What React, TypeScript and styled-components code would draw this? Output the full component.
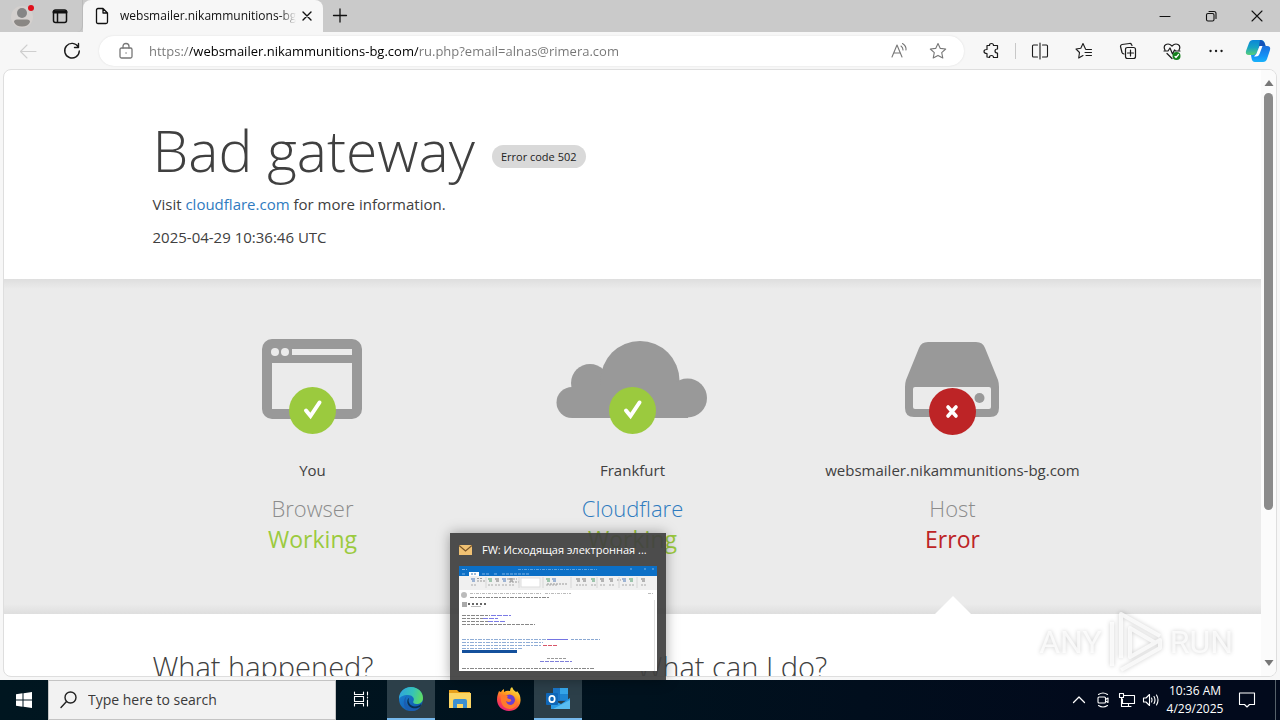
import React from "react";
import styled, { createGlobalStyle } from "styled-components";

const GlobalStyle = createGlobalStyle`
  * { box-sizing: border-box; }
  html, body { margin: 0; padding: 0; }
  body { font-family: "Open Sans", "Noto Sans", sans-serif; color: #404040; overflow: hidden; }
  button { border: 0; padding: 0; margin: 0; background: none; font: inherit; color: inherit; }
  input { font: inherit; }
  h1, h2, h3, p { margin: 0; font-weight: 400; }
  a { color: #2f7bbf; text-decoration: none; }
  svg { display: block; flex: none; }
`;

const Desktop = styled.div`
  display: flex;
  flex-direction: column;
  height: 100vh;
  background: #f7f7f7;
`;

/* ---------- browser chrome ---------- */

const TabBar = styled.header`
  display: flex;
  align-items: stretch;
  height: 32px;
  background: #cacaca;
  color: #111;
`;

const TabTools = styled.div`
  display: flex;
  align-items: center;
  gap: 18px;
  width: 83px;
  padding-left: 10px;
  border-right: 1px solid #bababa;
  border-bottom-right-radius: 6px;
`;

const Tab = styled.div`
  display: flex;
  align-items: center;
  width: 240px;
  padding: 0 6px 0 12px;
  background: #f7f7f7;
  border-radius: 8px 8px 0 0;
`;

const TabTitle = styled.span`
  flex: 1;
  margin-left: 11px;
  overflow: hidden;
  white-space: nowrap;
  font-size: 12px;
  line-height: 16px;
  color: #111;
  mask-image: linear-gradient(90deg, #000 160px, transparent 176px);
`;

const IconButton = styled.button<{ $w: number }>`
  display: flex;
  align-items: center;
  justify-content: center;
  flex: none;
  width: ${(p) => p.$w}px;
  height: 100%;
`;

const WindowControls = styled.div`
  display: flex;
  margin-left: auto;
`;

const Toolbar = styled.div`
  display: flex;
  align-items: center;
  height: 37px;
  padding: 0 2px 0 6px;
  color: #1b1b1b;
`;

const AddressBar = styled.div`
  display: flex;
  align-items: center;
  flex: 1;
  height: 30px;
  margin: 0 5px;
  padding: 0 6px 0 10px;
  border-radius: 15px;
  background: #fff;
  box-shadow: 0 0 2px #dcdcdc;
  color: #777;
`;

const UrlInput = styled.input`
  flex: 1;
  min-width: 0;
  margin-left: 6px;
  padding: 0;
  border: 0;
  outline: 0;
  font-size: 13px;
  line-height: 20px;
  color: #222;
  background: linear-gradient(90deg, #757575 41px, #000 41px, #000 269px, #757575 269px);
  background-clip: text;
  -webkit-background-clip: text;
  -webkit-text-fill-color: transparent;
`;

const Divider = styled.span`
  width: 1px;
  height: 16px;
  margin: 0 2px;
  background: #c8c8c8;
`;

/* ---------- page ---------- */

const Viewport = styled.div`
  display: flex;
  flex: 1;
  min-height: 0;
  margin: 0 3px 3px;
  border: 1px solid #dedede;
  border-radius: 8px;
  background: #fff;
  overflow: hidden;
`;

const Page = styled.main`
  flex: 1;
  min-width: 0;
  overflow: hidden;
`;

const Container = styled.div`
  max-width: 960px;
  margin: 0 auto;
`;

const PageHeader = styled(Container)`
  height: 209px;
  padding-top: 39px;
  font-size: 15px;
  line-height: 24px;
  p { margin-bottom: 9px; }
`;

const TitleRow = styled.div`
  display: flex;
  align-items: center;
  gap: 17px;
  height: 83px;
`;

const Title = styled.h1`
  font-size: 57px;
  line-height: 83px;
  font-weight: 300;
`;

const Code = styled.span`
  margin-top: 12px;
  padding: 0 9px;
  border-radius: 12px;
  background: #d9d9d9;
  font-size: 11px;
  line-height: 23px;
  color: #222;
`;

const StatusBand = styled.section`
  background: linear-gradient(#dedede, #ebebeb 3%, #ebebeb 97%, #dedede);
`;

const StatusColumns = styled(Container)`
  display: grid;
  grid-template-columns: repeat(3, 1fr);
  height: 335px;
`;

const StatusCard = styled.div`
  position: relative;
  display: flex;
  flex-direction: column;
  align-items: center;
  padding-top: 58px;
  white-space: nowrap;
`;

const Place = styled.span`
  margin-top: 23px;
  font-size: 15px;
  line-height: 24px;
`;

const Role = styled.h3<{ $color: string }>`
  margin-top: 11px;
  font-size: 22px;
  line-height: 30px;
  font-weight: 300;
  color: ${(p) => p.$color};
`;

const State = styled.span<{ $color: string }>`
  font-size: 23px;
  line-height: 32px;
  color: ${(p) => p.$color};
`;

const Notch = styled.span`
  position: absolute;
  bottom: 0;
  left: 50%;
  margin-left: -18px;
  border: solid transparent;
  border-width: 0 18px 18px;
  border-bottom-color: #fff;
`;

const Explain = styled(Container)`
  display: grid;
  grid-template-columns: 1fr 1fr;
  column-gap: 8px;
  padding-top: 32px;
`;

const Question = styled.h2`
  font-size: 29px;
  line-height: 42px;
  font-weight: 300;
  white-space: nowrap;
`;

const ScrollBar = styled.div`
  display: flex;
  flex-direction: column;
  align-items: center;
  width: 15px;
  padding: 9px 0;
  background: #fbfbfb;
`;

const Thumb = styled.div`
  flex: 418;
  width: 9px;
  margin-top: 6px;
  border-radius: 5px;
  background: #8b8b8b;
`;

const TrackRest = styled.div`
  flex: 150;
`;

/* ---------- taskbar ---------- */

const TaskBar = styled.footer`
  display: flex;
  align-items: stretch;
  position: relative;
  height: 40px;
  background: linear-gradient(90deg, #001620, #00121e 50%, #020a1c 85%);
  color: #fff;
`;

const SearchBox = styled.label`
  display: flex;
  align-items: center;
  gap: 11px;
  width: 288px;
  padding-left: 11px;
  background: #f2f2f2;
  border: 1px solid #c4c4c4;
  color: #222;
  input {
    flex: 1;
    min-width: 0;
    border: 0;
    padding: 0;
    background: none;
    font-size: 14px;
    line-height: 20px;
  }
  input::placeholder { color: #3a3a3a; opacity: 1; }
`;

const Apps = styled.div`
  display: flex;
  gap: 1px;
`;

const AppSlot = styled.div`
  position: relative;
`;

const AppButton = styled(IconButton)<{ $open?: boolean }>`
  background: ${(p) => (p.$open ? "#2c3f49" : "none")};
  border-bottom: 2px solid ${(p) => (p.$open ? "#76b9ed" : "transparent")};
`;

const Tray = styled.div`
  display: flex;
  margin-left: auto;
`;

const Clock = styled.time`
  width: 64px;
  padding-top: 2px;
  font-size: 12px;
  line-height: 18px;
  text-align: center;
  white-space: nowrap;
`;

const ShowDesktop = styled.button`
  width: 5px;
  margin-left: 8px;
  border-left: 1px solid #56616a;
`;

const Preview = styled.div`
  position: absolute;
  bottom: 100%;
  left: 50%;
  width: 216px;
  margin-left: -108px;
  padding: 0 9px 9px;
  background: rgba(64, 64, 64, 0.93);
  box-shadow: 0 0 12px rgba(0, 0, 0, 0.35);
`;

const PreviewTitle = styled.div`
  display: flex;
  align-items: center;
  gap: 10px;
  height: 33px;
  font-size: 11px;
  line-height: 16px;
  white-space: nowrap;
`;

const Watermark = styled.div`
  position: absolute;
  right: 47px;
  bottom: 46px;
  display: flex;
  align-items: center;
  gap: 6px;
  color: rgba(255, 255, 255, 0.75);
  font-family: Roboto, sans-serif;
  font-size: 32px;
  line-height: 64px;
  filter: drop-shadow(0 0 2px rgba(0, 0, 0, 0.25));
`;

/* ---------- drawings ---------- */

const Svg = ({ w = 20, h = w, children, sw = 1.1 }: { w?: number; h?: number; sw?: number; children: React.ReactNode }) => (
  <svg width={w} height={h} viewBox={`0 0 ${w} ${h}`} fill="none" stroke="currentColor" strokeWidth={sw} strokeLinecap="round" strokeLinejoin="round" aria-hidden="true">
    {children}
  </svg>
);

const Check = ({ x, y }: { x: number; y: number }) => (
  <g>
    <circle cx={x} cy={y} r="23.5" fill="#9bca3e" />
    <path d={`M${x - 6.5} ${y}L${x - 2} ${y + 5.5}L${x + 7} ${y - 8}`} fill="none" stroke="#fff" strokeWidth="4" strokeLinecap="round" />
  </g>
);

const BrowserDrawing = () => (
  <svg width="160" height="98" viewBox="1 0 160 98" aria-hidden="true">
    <rect x="30" y="2" width="100" height="80" rx="10" fill="#999" />
    <circle cx="43" cy="15" r="4" fill="#ebebeb" />
    <circle cx="53" cy="15" r="4" fill="#ebebeb" />
    <path d="M60 12H120V18H60ZM40 26H120V72H40Z" fill="#ebebeb" />
    <Check x={80.5} y={73.5} />
  </svg>
);

const CloudDrawing = () => (
  <svg width="160" height="98" viewBox="1 0 160 98" aria-hidden="true">
    <g fill="#999">
      <circle cx="20" cy="65.5" r="15.5" />
      <circle cx="38" cy="46" r="19" />
      <circle cx="88" cy="43.5" r="39.5" />
      <circle cx="135.500" cy="61" r="19.500" />
      <rect x="20" y="50" width="116" height="31" />
    </g>
    <Check x={80.5} y={73.5} />
  </svg>
);

const ServerDrawing = () => (
  <svg width="160" height="98" viewBox="1 0 160 98" aria-hidden="true">
    <path d="M56 5H104Q111 5 113 11L126 43Q127 46 127 50V71Q127 80 118 80H42Q33 80 33 71V50Q33 46 34 43L47 11Q49 5 56 5Z" fill="#999" />
    <path d="M43 50H117Q119 50 119 52V70Q119 72 117 72H43Q41 72 41 70V52Q41 50 43 50Z" fill="#ebebeb" />
    <circle cx="107.500" cy="61" r="5" fill="#999" />
    <circle cx="80.500" cy="74.500" r="23.500" fill="#bd2426" />
    <path d="M76 70L84 79M84 70L76 79" stroke="#fff" strokeWidth="3.600" strokeLinecap="round" />
  </svg>
);

const CopilotLogo = () => (
  <svg width="26" height="24" viewBox="0 0 26 24" aria-hidden="true">
    <defs>
      <linearGradient id="cpA" x1="0" y1="0" x2="0" y2="1"><stop stopColor="#0a86d8" /><stop offset=".5" stopColor="#16a3c4" /><stop offset="1" stopColor="#58cf7a" /></linearGradient>
      <linearGradient id="cpB" x1="0" y1="0" x2="0" y2="1"><stop stopColor="#1d6fdc" /><stop offset=".6" stopColor="#1491f5" /><stop offset="1" stopColor="#18b2fa" /></linearGradient>
    </defs>
    <path d="M8 1H16Q19 1 20 5L20.500 7H18Q14 7 13 11L11.500 16H4Q0 16 1 12L4 4Q5 1 8 1Z" fill="url(#cpA)" />
    <path d="M18 23H10Q7 23 6.500 19L6 16H8Q11 16 12.500 12L14 7H22Q26 7 25 11L22 20Q21 23 18 23Z" fill="url(#cpB)" />
    <path d="M15 1Q18 1 20 5L20.500 7H14L15 1Z" fill="#1552b8" />
    <path d="M14.500 7H17.500L14.500 15Q13.500 17.500 11 17.500H9Q11.500 16 12.500 12Z" fill="#fff" />
  </svg>
);

const EdgeLogo = () => (
  <svg width="26" height="26" viewBox="0 0 26 26" aria-hidden="true">
    <defs>
      <linearGradient id="edA" x1="0" y1=".3" x2="1" y2=".5"><stop stopColor="#2fa4de" /><stop offset=".55" stopColor="#35c3b8" /><stop offset="1" stopColor="#5fdc62" /></linearGradient>
      <linearGradient id="edB" x1="0" y1="0" x2="1" y2="1"><stop stopColor="#1c84d6" /><stop offset="1" stopColor="#0e55a6" /></linearGradient>
    </defs>
    <circle cx="13" cy="13" r="12" fill="url(#edB)" />
    <path d="M1 13C1 6 6 1 13 1C20 1 25 6 25 12C25 16 22 18 18.500 18C15.500 18 14.500 16.500 15.500 15C17 12 14 9 10 9C5 9 2 11 1 13Z" fill="url(#edA)" />
    <path d="M9 10C6 14 8 21 15 22.500C18 23 21 22 22.500 20.500C20 25 14 26 9.500 24C5 21 4.500 13 9 10Z" fill="#1b5db0" />
    <path d="M11 12C9.500 16 12 20 17 20.500C20 20.500 22.500 19 23.500 17.500L22.500 20.500C19 23 14 23 11 20C8.500 17 9 13 11 12Z" fill="#0b2f50" />
  </svg>
);

const FolderLogo = () => (
  <svg width="24" height="22" viewBox="0 0 24 22" aria-hidden="true">
    <path d="M1 2H9L11 4H22V9H1Z" fill="#e9a21d" />
    <path d="M1 5H23V20H1Z" fill="#fbd564" />
    <path d="M5 20V13Q5 11 7 11H17Q19 11 19 13V20H15V16H9V20Z" fill="#3c8fd0" />
  </svg>
);

const FirefoxLogo = () => (
  <svg width="26" height="26" viewBox="0 0 26 26" aria-hidden="true">
    <defs>
      <linearGradient id="ffA" x1=".8" y1="0" x2=".3" y2="1"><stop stopColor="#fff04a" /><stop offset=".4" stopColor="#ff9a20" /><stop offset=".7" stopColor="#ff4a42" /><stop offset="1" stopColor="#e32081" /></linearGradient>
    </defs>
    <path d="M3 5Q4 6 5 6Q6 4 8 3L8 6Q11 4 14 5Q14 2 16 1Q17 4 20 6Q21 6 21 5Q25 9 24.500 15C24 21 19 25 13 25C6 25 1 20 1 13.500C1 10 2 8 3 5Z" fill="url(#ffA)" />
    <circle cx="13.500" cy="14" r="5.500" fill="#6a3fd0" />
    <path d="M5 10Q8 8 12 10Q10 12 13 13Q16 13 15 15Q13 17 10 15Q11 19 15 19Q20 18 19 12Q23 17 19 21Q14 25 8 21Q4 17 5 10Z" fill="#ff7a2b" />
  </svg>
);

const OutlookLogo = () => (
  <svg width="26" height="24" viewBox="0 0 26 24" aria-hidden="true">
    <path d="M8 1H23V14H8Z" fill="#1a75c6" />
    <path d="M15 1H23V7H15Z" fill="#35a6ea" />
    <path d="M15 7H23V13H15Z" fill="#1d85d2" />
    <path d="M6 12L16 17L25 11V22H6Z" fill="#2a9be6" />
    <path d="M8 22L25 13V22Z" fill="#59bdf2" />
    <rect x="1" y="6" width="12" height="12" rx="1" fill="#0f67b8" />
    <ellipse cx="7" cy="12" rx="2.700" ry="3.100" fill="none" stroke="#fff" strokeWidth="1.700" />
  </svg>
);

const ribbonGroups = [12, 29, 36, 43, 50, 87, 93, 117, 123, 132, 141, 150, 163, 170, 182];

const MailThumbnail = () => (
  <svg width="198" height="105" viewBox="0 0 198 105" fill="none" aria-hidden="true">
    <rect width="198" height="105" fill="#fff" />
    <rect width="198" height="10" fill="#0b6fc6" />
    <rect x="10" y="6" width="10" height="5" fill="#fff" />
    <path d="M12 8H18" stroke="#3a78b5" strokeDasharray="2 1" />
    <path d="M59 3.500H138" stroke="#5fa3dd" strokeDasharray="3 1 1 1" />
    <path d="M3 3.500H8M3 8H6M23 8H30M35 8H39M43 8H70M171 3H173M185 3H187M193 3H195" stroke="#7fb6e8" strokeDasharray="3 1" />
    <rect y="10" width="198" height="14" fill="#f0f0f0" />
    <rect x="62" y="12" width="19" height="9" fill="#fff" stroke="#ddd" />
    {ribbonGroups.map((x, i) => (
      <g key={x}>
        <path d={`M${x} 13H${x + 4}M${x + 1} 15H${x + 4}`} stroke={i % 4 === 1 ? "#4c9a6a" : i % 3 === 0 ? "#4d79b8" : "#777"} />
        <path d={`M${x} 19H${x + 5}`} stroke="#aaa" strokeDasharray="2 1" />
      </g>
    ))}
    <path d="M18 12.500H24M18 15H26M48 13H58M50 16H60M88 18H108M158 14H162" stroke="#999" strokeDasharray="2 1" />
    <path d="M27 11V22M60 11V22M84 11V22M112 11V22M138 11V22M160 11V22M178 11V22" stroke="#d6d6d6" />
    <circle cx="5" cy="29" r="3" fill="#bbb" />
    <path d="M11 27.500H82M86 27.500H112M189 27.500H195" stroke="#bbb" strokeDasharray="3 1 1 1" />
    <path d="M11 31.500H90" stroke="#888" strokeDasharray="4 1 2 1" />
    <path d="M3 38H7M9 38H28" stroke="#666" strokeWidth="2" strokeDasharray="2 2" />
    <path d="M12 40.500H22" stroke="#bbb" />
    <rect x="3" y="36" width="5" height="5" fill="#aaa" />
    <path d="M3 49.500H31M3 52.500H28M3 55.500H30M3 58.500H76" stroke="#888" strokeDasharray="4 1 3 1" />
    <path d="M32 49.500H52M24 52.500H39M29 55.500H47" stroke="#7b7be6" strokeDasharray="5 1" />
    <path d="M3 73.500H108M3 76.500H84M3 79.500H82M3 82.500H64" stroke="#8fadd6" strokeDasharray="4 1 2 1" />
    <path d="M88 73.500H109" stroke="#7474e2" />
    <path d="M112 73.500H141" stroke="#8aa8d2" strokeDasharray="3 1" />
    <path d="M84 79.500H98" stroke="#d8566a" strokeDasharray="4 1" />
    <rect x="3" y="84" width="55" height="3" fill="#14509c" />
    <path d="M88 92.500H107" stroke="#999" strokeDasharray="3 1" />
    <path d="M81 95.500H113" stroke="#7f7fda" strokeDasharray="4 1" />
    <path d="M3 102.500H135" stroke="#888" strokeDasharray="4 1 2 1" />
    <path d="M195.500 34V105" stroke="#e2e2e2" />
  </svg>
);

const trayIcons: [string, React.ReactNode][] = [
  ["Show hidden icons", <Svg w={14} key="c" sw={1.3}><path d="M1.500 9.500L7 4L12.500 9.500" /></Svg>],
  ["Meet now", <Svg w={16} h={18} key="m"><path d="M3.500 3.500Q8 .5 12.500 3.500M3.500 14.500Q8 17.500 12.500 14.500M4 6H9.500Q10.500 6 10.500 7V11Q10.500 12 9.500 12H4Q3 12 3 11V7Q3 6 4 6ZM10.500 8.500L13 7V11.500L10.500 10" /></Svg>],
  ["Network", <Svg w={18} h={16} key="n"><path d="M6 3.500H16.500V11.500H4.500V7M1.500 1.500H5.500V5.500H1.500ZM3.500 5.500V14.500H13M10.500 11.500V14.500" /></Svg>],
  ["Volume", <Svg w={18} h={16} key="v"><path d="M1.500 6H4L7.500 2.500V13.500L4 10H1.500ZM9.500 6Q10.500 8 9.500 10M12 4.500Q14 8 12 11.500M14.500 3Q17.500 8 14.500 13" /></Svg>],
];

const toolbarIcons: [string, React.ReactNode][] = [
  ["Split screen", <Svg w={18} key="s"><path d="M6.500 3H2.500Q1.500 3 1.500 4V14Q1.500 15 2.500 15H6.500M11.500 3H15.500Q16.500 3 16.500 4V14Q16.500 15 15.500 15H11.500M9 1V17" /></Svg>],
  ["Favorites", <Svg w={18} key="f"><path d="M10.500 7L8 1.500L5.800 6.300L1 7L4.500 10.500L3.700 16L8 13.500M11 7.500H16.500M10 10.500H16.500M11 13.500H16.500" /></Svg>],
  ["Collections", <Svg w={18} key="l" sw={1.2}><path d="M8.500 5.500H14.500Q16.500 5.500 16.500 7.500V14.500Q16.500 16.500 14.500 16.500H8.500Q6.500 16.500 6.500 14.500V7.500Q6.500 5.500 8.500 5.500M11.500 8V14M8.500 11H14.500M13 3.500L12.500 2.500Q12 1.300 10.500 1.500L3 2.500Q1.300 3 1.500 4.500L3 10.500Q3.500 11.800 5 12" /></Svg>],
  ["Browser essentials", <Svg w={18} key="b" sw={1.2}><path d="M2 8Q0 4 3 2.500Q6 1 9 4Q12 1 15 2.500Q18 4 16 8M1 9H5L7 6L9.500 12L11.500 8L12.500 9H17M4 11.500L9 16.500" /><circle cx="13.500" cy="14" r="4" fill="#14801b" stroke="none" /><path d="M12 14.500L13 15.500L15.500 12.500" stroke="#fff" /></Svg>],
  ["Settings and more", <Svg w={18} key="d"><path d="M3.500 9H3.600M9 9H9.100M14.500 9H14.600" strokeWidth="2.300" /></Svg>],
];

export default function App() {
  return (
    <Desktop>
      <GlobalStyle />
      <TabBar>
        <TabTools>
          <button aria-label="Profile">
            <svg width="24" height="26" viewBox="0 0 24 26" aria-hidden="true">
              <circle cx="12" cy="14" r="11" fill="#d4d0ce" />
              <circle cx="12" cy="10" r="5" fill="#858585" />
              <path d="M4 19Q4 16.500 7 16.500H17Q20 16.500 20 19Q18 23.500 12 23.500Q6 23.500 4 19Z" fill="#8a8784" />
              <circle cx="21" cy="5" r="3" fill="#e0101c" />
            </svg>
          </button>
          <button aria-label="Tab actions">
            <Svg w={16} sw={1.5}><rect x="1.500" y="2" width="13" height="12.500" rx="2" /><path d="M2 4H14" strokeWidth="3" /><path d="M5.500 5V14" /></Svg>
          </button>
        </TabTools>
        <Tab>
          <Svg w={14} h={18} sw={1.3}><path d="M3 1.500H8L12.500 6V15Q12.500 16.500 11 16.500H3Q1.500 16.500 1.500 15V3Q1.500 1.500 3 1.500ZM8 1.500V6H12.500" /></Svg>
          <TabTitle>websmailer.nikammunitions-bg.com</TabTitle>
          <IconButton $w={20} aria-label="Close tab"><Svg w={12} sw={1.4}><path d="M2 2L10 10M10 2L2 10" /></Svg></IconButton>
        </Tab>
        <IconButton $w={34} aria-label="New tab"><Svg w={16} sw={1.3}><path d="M1.500 7.500H14.500M8 1V14" /></Svg></IconButton>
        <WindowControls>
          <IconButton $w={46} aria-label="Minimize"><Svg w={12}><path d="M1 6.500H11" /></Svg></IconButton>
          <IconButton $w={46} aria-label="Restore"><Svg w={12}><rect x="1.500" y="3.500" width="7.500" height="7.500" rx="1.500" /><path d="M4 1.500H9Q11 1.500 11 3.500V8.500" /></Svg></IconButton>
          <IconButton $w={46} aria-label="Close"><Svg w={12}><path d="M1 1L11 11M11 1L1 11" /></Svg></IconButton>
        </WindowControls>
      </TabBar>

      <Toolbar>
        <IconButton $w={44} aria-label="Back"><Svg w={18}><path d="M17 9.500H1.500M8 3L1.500 9.500L8 16" stroke="#cfcfcf" /></Svg></IconButton>
        <IconButton $w={44} aria-label="Refresh"><Svg w={18} sw={1.4}><path d="M15.300 5A7.300 7.300 0 1 0 16.300 9M15.500 1.500V5.500H11.500" /></Svg></IconButton>
        <AddressBar>
          <IconButton $w={34} aria-label="Site information"><Svg w={16} h={18} sw={1.3}><rect x="2" y="6" width="12" height="10" rx="1.500" /><path d="M5 6V4.500Q5 1.500 8 1.500Q11 1.500 11 4.500V6M8 11H8.100" /></Svg></IconButton>
          <UrlInput aria-label="Address" defaultValue="https://websmailer.nikammunitions-bg.com/ru.php?email=alnas@rimera.com" />
          <IconButton $w={38} aria-label="Read aloud"><Svg w={18}><path d="M2 15L7 3L12 15M4 11H10.500M11 4Q13 5.500 13 8M12.500 1.500Q16.500 4 16 8" /></Svg></IconButton>
          <IconButton $w={40} aria-label="Add to favorites"><Svg w={18}><path d="M9 1.500L11.300 6.400L16.700 7L12.700 10.700L13.800 16L9 13.400L4.200 16L5.300 10.700L1.300 7L6.700 6.400Z" /></Svg></IconButton>
        </AddressBar>
        <IconButton $w={44} aria-label="Extensions"><Svg w={18} sw={1.2}><path d="M5 3.500H7.500Q7.500 1.500 9.500 1.500Q11.500 1.500 11.500 3.500H15.500V7Q13 7 13 9Q13 11 15.500 11V15.500H11.500Q11.500 13.500 9.500 13.500Q7.500 13.500 7.500 15.500L5 15V11.500Q2 11.500 2 9.500Q2 7.500 5 7.500Z" /></Svg></IconButton>
        <Divider />
        {toolbarIcons.map(([label, icon]) => (
          <IconButton key={label} $w={44} aria-label={label}>{icon}</IconButton>
        ))}
        <IconButton $w={40} aria-label="Copilot"><CopilotLogo /></IconButton>
      </Toolbar>

      <Viewport>
        <Page>
          <PageHeader>
            <TitleRow>
              <Title>Bad gateway</Title>
              <Code>Error code 502</Code>
            </TitleRow>
            <p>Visit <a href="#cloudflare">cloudflare.com</a> for more information.</p>
            <p>2025-04-29 10:36:46 UTC</p>
          </PageHeader>
          <StatusBand>
            <StatusColumns>
              <StatusCard>
                <BrowserDrawing />
                <Place>You</Place>
                <Role $color="#8c8c8c">Browser</Role>
                <State $color="#9bca3e">Working</State>
              </StatusCard>
              <StatusCard>
                <CloudDrawing />
                <Place>Frankfurt</Place>
                <Role $color="#2f7bbf"><a href="#network">Cloudflare</a></Role>
                <State $color="#9bca3e">Working</State>
              </StatusCard>
              <StatusCard>
                <ServerDrawing />
                <Place>websmailer.nikammunitions-bg.com</Place>
                <Role $color="#8c8c8c">Host</Role>
                <State $color="#bd2426">Error</State>
                <Notch />
              </StatusCard>
            </StatusColumns>
          </StatusBand>
          <Explain>
            <Question>What happened?</Question>
            <Question>What can I do?</Question>
          </Explain>
        </Page>
        <ScrollBar>
          <Svg w={10} h={8}><path d="M5 1L9.500 7H.5Z" fill="#777" stroke="none" /></Svg>
          <Thumb />
          <TrackRest />
          <Svg w={10} h={8}><path d="M5 7L9.500 1H.5Z" fill="#777" stroke="none" /></Svg>
        </ScrollBar>
      </Viewport>

      <TaskBar>
        <IconButton $w={48} aria-label="Start">
          <svg width="16" height="16" viewBox="0 0 16 16" fill="#fff" aria-hidden="true"><path d="M0 2.200L6.500 1.300V7.500H0ZM7.500 1.200L16 0V7.500H7.500ZM0 8.500H6.500V14.700L0 13.800ZM7.500 8.500H16V16L7.500 14.800Z" /></svg>
        </IconButton>
        <SearchBox>
          <Svg w={17} h={18} sw={1.4}><circle cx="10.500" cy="6.500" r="5.500" /><path d="M6.500 10.500L1 16.500" /></Svg>
          <input type="text" placeholder="Type here to search" aria-label="Search" />
        </SearchBox>
        <Apps>
          <AppButton $w={50} aria-label="Task view">
            <Svg w={18}><path d="M2.500 2V4.500H11.500V2M2.500 16V13.500H11.500V16M2.500 6.500H11.500V11.500H2.500ZM15.500 2V5M15.500 10V16M15.500 7V8" /></Svg>
          </AppButton>
          <AppButton $w={48} $open aria-label="Microsoft Edge"><EdgeLogo /></AppButton>
          <AppButton $w={48} aria-label="File Explorer"><FolderLogo /></AppButton>
          <AppButton $w={48} aria-label="Firefox"><FirefoxLogo /></AppButton>
          <AppSlot>
            <AppButton $w={48} $open aria-label="Outlook"><OutlookLogo /></AppButton>
            <Preview>
              <PreviewTitle>
                <svg width="13" height="10" viewBox="0 0 13 10" aria-hidden="true"><rect width="13" height="10" fill="#f0c173" /><path d="M0 .5L6.500 6L13 .5" fill="none" stroke="#7a5528" strokeWidth="1.300" /></svg>
                <span>FW: Исходящая электронная ...</span>
              </PreviewTitle>
              <MailThumbnail />
            </Preview>
          </AppSlot>
        </Apps>
        <Tray>
          {trayIcons.map(([label, icon]) => (
            <IconButton key={label} $w={24} aria-label={label}>{icon}</IconButton>
          ))}
          <Clock>10:36 AM<br />4/29/2025</Clock>
          <IconButton $w={40} aria-label="Notifications"><Svg w={18}><path d="M1.500 2H16.500V13.500H11.500L9 16L6.500 13.500H1.500Z" /></Svg></IconButton>
          <ShowDesktop aria-label="Show desktop" />
        </Tray>
        <Watermark>
          <span>ANY</span>
          <svg width="56" height="64" viewBox="0 0 56 64" fill="none" stroke="#fff" strokeOpacity=".75" strokeWidth="4" strokeLinejoin="round" aria-hidden="true">
            <path d="M4 12V56M13 48V4L52 26M13 60L52 38V30L22 47V18L46 32" />
          </svg>
          <span>RUN</span>
        </Watermark>
      </TaskBar>
    </Desktop>
  );
}
